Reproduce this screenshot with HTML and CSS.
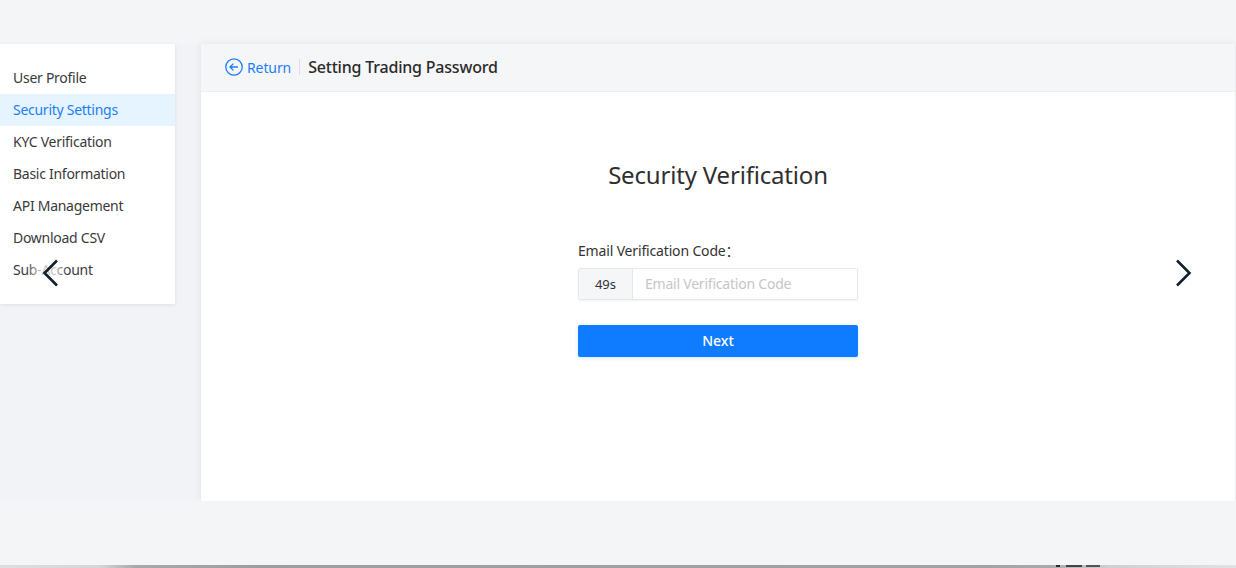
FILE: index.html
```html
<!DOCTYPE html>
<html lang="en">
<head>
<meta charset="utf-8">
<title>Setting Trading Password</title>
<link rel="stylesheet" href="styles.css">
</head>
<body>
<div class="page">
  <div class="layout">
    <nav class="sidebar">
      <a class="nav-item">User Profile</a>
      <a class="nav-item active">Security Settings</a>
      <a class="nav-item">KYC Verification</a>
      <a class="nav-item">Basic Information</a>
      <a class="nav-item">API Management</a>
      <a class="nav-item">Download CSV</a>
      <a class="nav-item">Sub-Account</a>
    </nav>
    <main class="panel">
      <header class="panel-head">
        <a class="return">
          <svg class="return-icon" width="18" height="18" viewBox="0 0 18 18" fill="none" stroke="#1a7efb" stroke-width="1.3"><circle cx="9" cy="9" r="8.2"/><path d="M13 9H5.2M8.400 5.600 5 9l3.400 3.400"/></svg>
          <span>Return</span>
        </a>
        <h1 class="panel-title">Setting Trading Password</h1>
      </header>
      <section class="panel-body">
        <h2 class="verify-title">Security Verification</h2>
        <form class="verify-form">
          <label class="field-label">Email Verification Code：</label>
          <div class="code-input">
            <span class="timer">49s</span>
            <input class="code-field" type="text" placeholder="Email Verification Code">
          </div>
          <button class="next" type="button">Next</button>
        </form>
      </section>
    </main>
  </div>
  <div class="footer"><div class="bottom-strip"></div></div>
</div>
<div class="arrow arrow-prev"><svg width="18" height="28" viewBox="0 0 18 28" fill="none" stroke="#14202c" stroke-width="2.6"><path d="M15 1.500 2.500 14 15 26.500"/></svg></div>
<div class="arrow arrow-next"><svg width="18" height="28" viewBox="0 0 18 28" fill="none" stroke="#14202c" stroke-width="2.6"><path d="M3 1.500 15.500 14 3 26.500"/></svg></div>
</body>
</html>
```
FILE: styles.css
```css
* { box-sizing: border-box; }
html, body { margin: 0; height: 100%; overflow: hidden; }
body {
  background: #f4f5f7;
  font-family: "Noto Sans", "Open Sans", sans-serif;
  font-size: 14px;
  color: #333;
}
.page { height: 568px; display: flex; flex-direction: column; padding-top: 44px; }
.layout { display: flex; gap: 26px; height: 457px; flex: none; background: #f2f3f7; padding-right: 1px; }
.sidebar {
  width: 175px; height: 260px; background: #fff; padding-top: 18px;
  box-shadow: 0 1px 4px rgba(0,0,0,.08);
  display: flex; flex-direction: column;
}
.nav-item { height: 32px; line-height: 32px; padding-left: 13px; letter-spacing: -.27px; color: #3a3a3a; }
.nav-item.active { background: #e6f4ff; color: #1a7efb; }
.panel { flex: 1; background: #fff; display: flex; flex-direction: column; box-shadow: 0 0 8px rgba(0,0,0,.07); }
.panel-head { height: 48px; background: #f5f6f8; border-bottom: 1px solid #eceef1; display: flex; align-items: center; padding-left: 24px; }
.return { display: flex; align-items: center; gap: 4px; color: #1a7efb; letter-spacing: -.1px; padding-right: 8px; border-right: 1px solid #dcdfe3; height: 16px; margin-top: -1px; }
.return-icon { flex: none; }
.panel-title { margin: -2px 0 0 8px; font-size: 16px; font-weight: 500; color: #2b2b2b; letter-spacing: -.2px; }
.panel-body { flex: 1; display: flex; flex-direction: column; align-items: center; padding-top: 66px; }
.verify-title { margin: 0; font-size: 24px; line-height: 34px; font-weight: 400; color: #2f2f2f; letter-spacing: -.18px; }
.verify-form { width: 280px; margin-top: 49px; display: flex; flex-direction: column; }
.field-label { line-height: 20px; letter-spacing: -.16px; color: #333; font-family: "Noto Sans", "Noto Sans CJK SC", sans-serif; }
.code-input { margin-top: 7px; height: 32px; display: flex; border: 1px solid #e6e7ea; border-radius: 2px; box-shadow: 0 1px 2px rgba(0,0,0,.05); }
.timer { width: 54px; flex: none; background: #f5f6f8; border-right: 1px solid #e6e7ea; text-align: center; line-height: 30px; font-size: 13px; color: #333; }
.code-field { flex: 1; min-width: 0; border: 0; outline: 0; padding: 0 12px 2px; font: inherit; letter-spacing: -.22px; background: #fff; }
.code-field::placeholder { color: #c4c6ca; opacity: 1; }
.next { margin-top: 25px; height: 32px; padding: 0 0 2px; border: 0; border-radius: 2px; background: #0f7bff; color: #fff; font: inherit; font-weight: 500; box-shadow: 0 1px 4px rgba(15,123,255,.2); }
.footer { position: relative; flex: 1; background: #f4f5f7; display: flex; flex-direction: column; justify-content: flex-end; }
.bottom-strip {
  height: 3px;
  background:
    linear-gradient(90deg, transparent 1056px, #2a2a2a 1056px, #2a2a2a 1060px, transparent 1060px, transparent 1066px, #444 1066px, #444 1082px, transparent 1082px, transparent 1086px, #555 1086px, #555 1100px, transparent 1100px) 0 0 / 100% 2px no-repeat,
    linear-gradient(90deg, #dedede 0, #d6d6d6 100px, #a8a9a8 135px, #9d9f9e 255px, #a1a2a1 980px, #a9aaa9 1050px, #d0d0d0 1110px, #e2e2e2 100%);
}
.arrow { position: absolute; top: 259px; width: 18px; height: 28px; }
.arrow-prev { left: 42px; }
.arrow-prev::before { content: ""; position: absolute; left: -16px; right: -8px; top: 4px; bottom: 4px; background: linear-gradient(90deg, rgba(255,255,255,0), rgba(255,255,255,.7) 35%, rgba(255,255,255,.7) 70%, rgba(255,255,255,0)); }
.arrow-next { left: 1174px; }
.arrow svg { display: block; position: relative; }
```
